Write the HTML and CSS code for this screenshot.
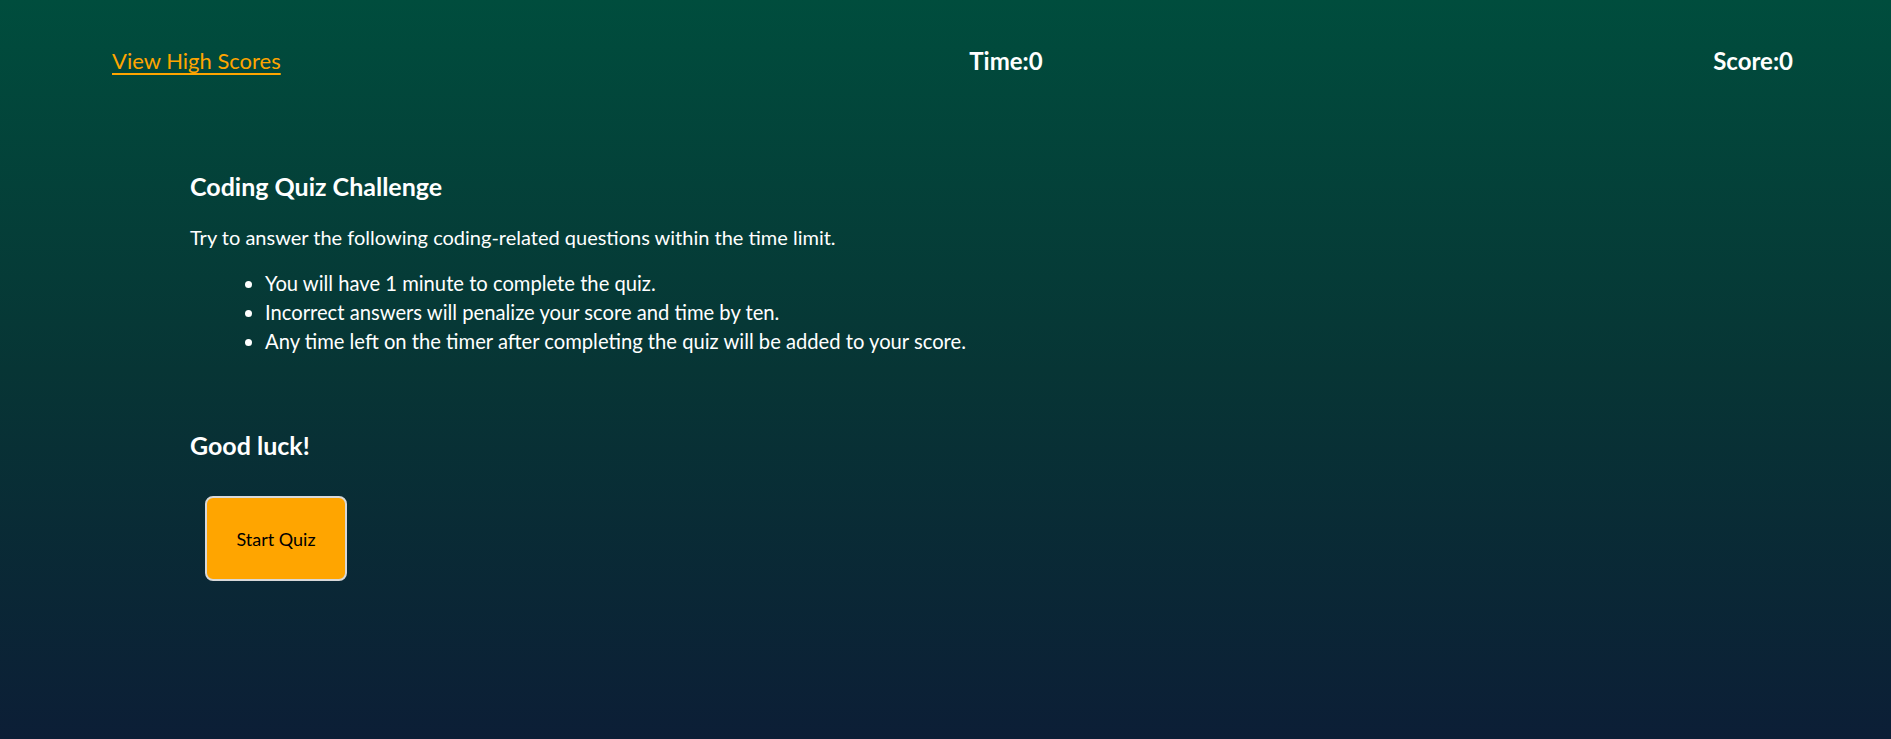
FILE: index.html
```html
<!DOCTYPE html>
<html>
<head>
<meta charset="utf-8">
<link rel="stylesheet" href="styles.css">
</head>
<body>
<header class="topbar">
  <a class="scores-link" href="#">View High Scores</a>
  <div class="timer">Time:0</div>
  <div class="score">Score:0</div>
</header>
<main class="intro">
  <h2 class="title">Coding Quiz Challenge</h2>
  <p class="lead">Try to answer the following coding-related questions within the time limit.</p>
  <ul class="rules">
    <li>You will have 1 minute to complete the quiz.</li>
    <li>Incorrect answers will penalize your score and time by ten.</li>
    <li>Any time left on the timer after completing the quiz will be added to your score.</li>
  </ul>
  <h2 class="luck">Good luck!</h2>
  <button class="start-btn">Start Quiz</button>
</main>
</body>
</html>
```
FILE: styles.css
```css
html, body {
  margin: 0;
  height: 100%;
}
body {
  background: linear-gradient(to bottom, #004d3d 0%, #073535 50%, #0c1e36 100%);
  color: #ffffff;
  font-family: "Trebuchet MS", "Lato", "DejaVu Sans", sans-serif;
  font-size: 20px;
}
.topbar {
  display: flex;
  justify-content: space-between;
  align-items: center;
  padding: 46px 98px 0 112px;
  font-size: 22px;
}
.scores-link {
  color: #ffa500;
  text-decoration: underline;
  text-underline-offset: 4px;
}
.timer, .score {
  font-weight: bold;
  font-size: 24px;
}
.timer {
  margin-left: 18px;
}
.intro {
  padding: 0 0 0 190px;
  margin-top: 96px;
}
.title {
  font-size: 25px;
  margin: 0 0 24px;
}
.lead {
  margin: 0 0 20px;
}
.rules {
  margin: 0;
  padding-left: 75px;
  line-height: 29px;
  font-size: 20.2px;
}
.luck {
  font-size: 25px;
  margin: 74px 0 36px;
}
.start-btn {
  margin-left: 15px;
  width: 142px;
  height: 85px;
  background: #ffa500;
  color: #000;
  border: 2px solid #d8d8d8;
  border-radius: 8px;
  font-family: inherit;
  font-size: 18px;
}
```
